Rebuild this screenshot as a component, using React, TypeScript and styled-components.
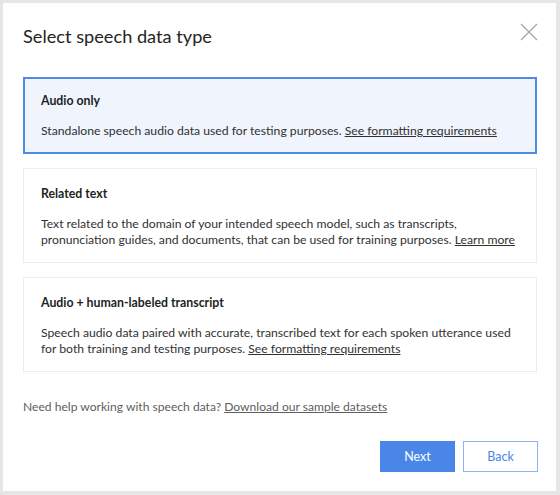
import React, { useState } from "react";
import styled, { createGlobalStyle } from "styled-components";

const Global = createGlobalStyle`
  html, body { margin: 0; padding: 0; }
  body {
    background: #e6e6e6;
    font-family: Lato, "Open Sans", sans-serif;
    color: #323130;
  }
`;

const Page = styled.div`
  width: 560px;
  height: 495px;
  box-sizing: border-box;
  padding: 3px 4px 4px 3px;
`;

const Dialog = styled.div`
  background: #ffffff;
  height: 100%;
  box-sizing: border-box;
  padding: 19px 18px 19px 20px;
  display: flex;
  flex-direction: column;
`;

const Header = styled.div`
  display: flex;
  align-items: center;
  justify-content: space-between;
  height: 28px;
`;

const Title = styled.h1`
  margin: 0;
  font-size: 18.2px;
  font-weight: 400;
  line-height: 28px;
  color: #252423;
`;

const CloseButton = styled.button`
  border: none;
  background: none;
  padding: 0;
  width: 22px;
  height: 22px;
  margin-top: -8px;
  margin-right: -2px;
  display: flex;
  align-items: center;
  justify-content: center;
  cursor: pointer;
`;

const Options = styled.div`
  margin-top: 27px;
  margin-right: 1px;
  display: flex;
  flex-direction: column;
  gap: 14px;
`;

const Card = styled.div<{ $selected?: boolean }>`
  border: 1px solid ${(p) => (p.$selected ? "#4f89e9" : "#ececec")};
  box-shadow: ${(p) => (p.$selected ? "inset 0 0 0 1px #4f89e9" : "none")};
  background: ${(p) => (p.$selected ? "#eff4fd" : "#ffffff")};
  padding: ${(p) => (p.$selected ? "14px" : "16px")} 17px 13px 17px;
  display: flex;
  flex-direction: column;
  gap: 13px;
  cursor: pointer;
`;

const CardTitle = styled.div`
  font-size: 12.3px;
  font-weight: 700;
  line-height: 18px;
  color: #201f1e;
`;

const CardText = styled.div`
  font-size: 12.2px;
  line-height: 16.5px;
  color: #323130;
`;

const Link = styled.a`
  color: inherit;
  text-decoration: underline;
  cursor: pointer;
`;

const Help = styled.div`
  margin-top: 27px;
  font-size: 12.1px;
  line-height: 16px;
  color: #605e5c;
`;

const Actions = styled.div`
  margin-top: auto;
  display: flex;
  justify-content: flex-end;
  gap: 8px;
`;

const Button = styled.button<{ $primary?: boolean }>`
  width: 75px;
  height: 31px;
  box-sizing: border-box;
  font-family: inherit;
  font-size: 12.5px;
  border: 1px solid ${(p) => (p.$primary ? "#4a86e8" : "#8db3f1")};
  background: ${(p) => (p.$primary ? "#4a86e8" : "#ffffff")};
  color: ${(p) => (p.$primary ? "#ffffff" : "#4a86e8")};
  cursor: pointer;
`;

const options = [
  {
    title: "Audio only",
    text: "Standalone speech audio data used for testing purposes. ",
    link: "See formatting requirements",
  },
  {
    title: "Related text",
    text: "Text related to the domain of your intended speech model, such as transcripts, pronunciation guides, and documents, that can be used for training purposes. ",
    link: "Learn more",
  },
  {
    title: "Audio + human-labeled transcript",
    text: "Speech audio data paired with accurate, transcribed text for each spoken utterance used for both training and testing purposes. ",
    link: "See formatting requirements",
  },
];

export default function App() {
  const [selected, setSelected] = useState(0);
  return (
    <>
      <Global />
      <Page>
        <Dialog>
          <Header>
            <Title>Select speech data type</Title>
            <CloseButton aria-label="Close">
              <svg width="18" height="18" viewBox="0 0 18 18">
                <path d="M1 1 L17 17 M17 1 L1 17" stroke="#a6a6a6" strokeWidth="1.3" fill="none" />
              </svg>
            </CloseButton>
          </Header>
          <Options>
            {options.map((o, i) => (
              <Card key={o.title} $selected={selected === i} onClick={() => setSelected(i)}>
                <CardTitle>{o.title}</CardTitle>
                <CardText>
                  {o.text}
                  <Link>{o.link}</Link>
                </CardText>
              </Card>
            ))}
          </Options>
          <Help>
            Need help working with speech data? <Link>Download our sample datasets</Link>
          </Help>
          <Actions>
            <Button $primary>Next</Button>
            <Button>Back</Button>
          </Actions>
        </Dialog>
      </Page>
    </>
  );
}
